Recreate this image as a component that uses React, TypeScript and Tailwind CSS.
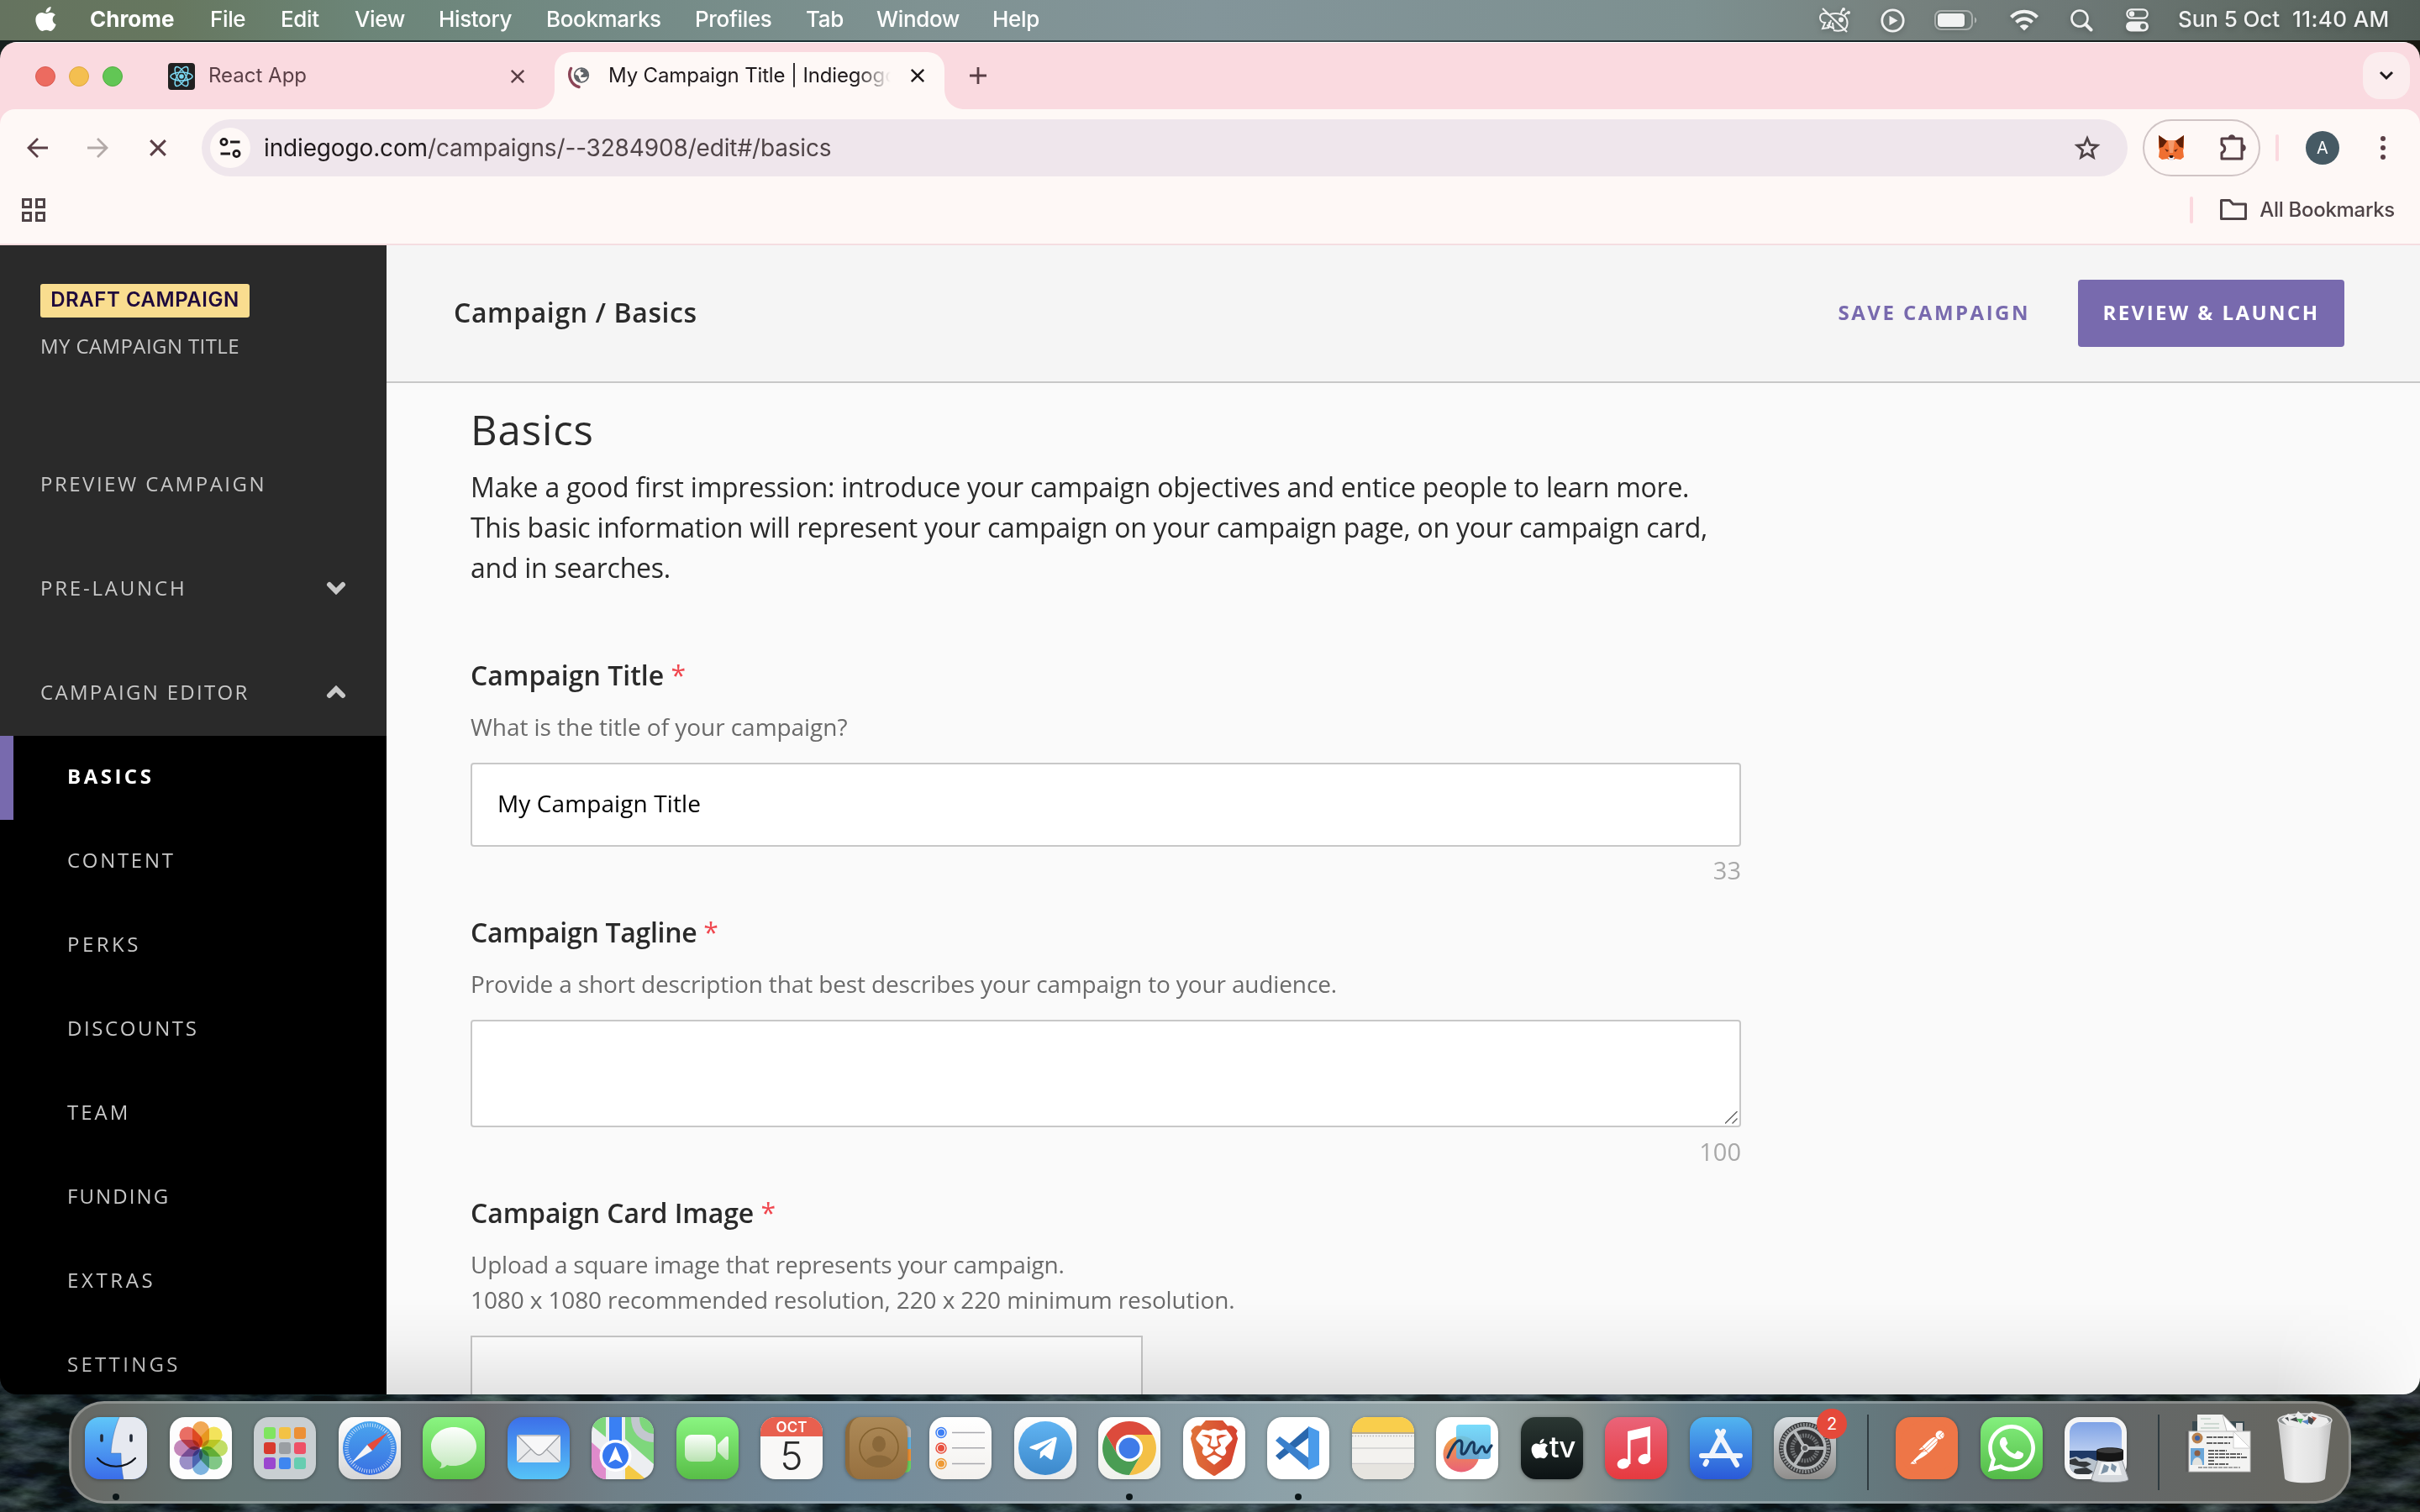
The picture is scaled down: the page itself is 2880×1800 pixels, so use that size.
import type { ReactNode } from "react";
import { FaApple, FaTelegramPlane, FaWhatsapp } from "react-icons/fa";
import { SiBrave, SiPostman } from "react-icons/si";

/* ---------- macOS menu bar ---------- */

const menus = [
  ["File", "w-[84px]"],
  ["Edit", "w-[88px]"],
  ["View", "w-[100px]"],
  ["History", "w-[128px]"],
  ["Bookmarks", "w-[177px]"],
  ["Profiles", "w-[132px]"],
  ["Tab", "w-[84px]"],
  ["Window", "w-[138px]"],
  ["Help", "w-[80px]"],
];

function MenuBar() {
  return (
    <header className="flex h-12 shrink-0 items-center bg-[linear-gradient(90deg,#65735f_0%,#66775f_7%,#6c8578_15%,#738a85_25%,#7f9292_38%,#83959a_50%,#7d9090_70%,#77827f_78%,#6d7876_86%,#616c66_93%,#525d57_100%)] pl-[38px] text-[26px] font-medium tracking-[-0.35px] text-white">
      <FaApple className="-mt-1 mr-[36px] size-[33px]" />
      <span className="w-[143px] pb-[3px] font-bold tracking-normal">Chrome</span>
      {menus.map(([name, width]) => (
        <span key={name} className={"pb-[3px] " + width}>{name}</span>
      ))}
      <div className="ml-auto flex items-center pr-[34px] text-[#f1f2f2] drop-shadow-[0_2px_3px_rgba(0,0,0,0.25)]">
        <svg className="h-8 w-[38px]" viewBox="0 0 38 32" fill="none" stroke="currentColor" strokeWidth="2">
          <path d="M14 9c6-2 14-1 18 3 4 5 3 12-1 15-4 2-9 2-13 1" />
          <path d="M13 10C8 6 2 8 2 13c0 4 3 6 6 6l-3 7 7-1 3-9" />
          <path d="M13 18l-1 8M17 19l1 8M10 22l9 4" />
          <path d="M27 9c0-3 1-5 3-6M31 11c1-3 3-4 6-4" />
          <circle cx="27" cy="15.500" r="2" fill="currentColor" />
          <circle cx="30" cy="3" r="1" />
          <circle cx="36" cy="7" r="1" />
          <path d="M5 2l29 28" strokeWidth="2.200" />
        </svg>
        <svg className="ml-9 size-[29px]" viewBox="0 0 29 29" fill="none">
          <circle cx="14.500" cy="14.500" r="12.700" stroke="currentColor" strokeWidth="2.800" />
          <path d="M10.500 8.800v11.400l10-5.700z" fill="currentColor" />
        </svg>
        <svg className="ml-[35px] h-6 w-[52px]" viewBox="0 0 52 24" fill="none">
          <rect x="1" y="1" width="44" height="22" rx="7" stroke="currentColor" strokeOpacity="0.45" strokeWidth="2" />
          <rect x="4" y="4" width="32" height="16" rx="4" fill="currentColor" />
          <path d="M48 8.500c3 1 3 6 0 7z" fill="currentColor" fillOpacity="0.5" />
        </svg>
        <svg className="ml-[38px] h-[26px] w-[34px]" viewBox="0 0 34 26" fill="none" stroke="currentColor" strokeWidth="4.200">
          <path d="M1.500 9.500C10 .5 24 .5 32.500 9.500" />
          <path d="M7.500 15.500c5.500-5.500 13.500-5.500 19 0" />
          <path d="M17 25.500l-5.300-5.300c3-2.600 7.600-2.600 10.600 0z" fill="currentColor" stroke="none" />
        </svg>
        <svg className="ml-[38px] size-[27px]" viewBox="0 0 27 27" fill="none" stroke="currentColor" strokeLinecap="round">
          <circle cx="11" cy="11" r="9.500" strokeWidth="2.600" />
          <path d="M18 18l6.500 6.500" strokeWidth="4" />
        </svg>
        <svg className="ml-[39px] h-7 w-[27px]" viewBox="0 0 27 28" fill="none">
          <rect x="1.300" y="1.300" width="24.400" height="10.400" rx="5.200" stroke="currentColor" strokeWidth="2.200" />
          <circle cx="7" cy="6.500" r="3.200" fill="currentColor" />
          <rect x="0" y="15.500" width="27" height="12" rx="6" fill="currentColor" />
          <circle cx="20.500" cy="21.500" r="3.400" fill="#65706c" />
        </svg>
        <span className="ml-[35px] pb-[3px] tracking-[-0.1px]">Sun 5 Oct</span>
        <span className="ml-[15px] w-[118px] whitespace-nowrap pb-[3px] tracking-[0.4px]">11:40 AM</span>
      </div>
    </header>
  );
}

/* ---------- Chrome ---------- */

function Cross({ className }: { className: string }) {
  return (
    <svg className={className} viewBox="0 0 20 20" fill="none" stroke="currentColor" strokeWidth="2.800">
      <path d="M2 2l16 16M18 2L2 18" />
    </svg>
  );
}

function TabStrip() {
  return (
    <div className="flex h-20 shrink-0 border-t border-white bg-[#fadae0]">
      <div className="flex w-[200px] items-center gap-4 pl-[42px]">
        <span className="size-6 rounded-full border border-[#d9584f] bg-[#ec6b60]" />
        <span className="size-6 rounded-full border border-[#dfa73d] bg-[#f4bf50]" />
        <span className="size-6 rounded-full border border-[#51ad40] bg-[#62c655]" />
      </div>
      <div className="flex w-[460px] items-center text-[#5a3f46]">
        <svg className="size-8 rounded bg-[#212121]" viewBox="0 0 32 32" fill="none" stroke="#7cd9f3" strokeWidth="1.500">
          <ellipse cx="16" cy="16" rx="13" ry="5" />
          <ellipse cx="16" cy="16" rx="13" ry="5" transform="rotate(60 16 16)" />
          <ellipse cx="16" cy="16" rx="13" ry="5" transform="rotate(120 16 16)" />
          <circle cx="16" cy="16" r="2" fill="#7cd9f3" />
        </svg>
        <span className="ml-4 pb-0.5 text-[24px]">React App</span>
        <Cross className="ml-auto mr-[35px] size-[18px]" />
      </div>
      <div className="relative mt-[11px] flex h-[68px] w-[464px] items-center rounded-t-[20px] bg-[#fef8f6] pb-3">
        <svg className="absolute -left-6 bottom-0 size-6" viewBox="0 0 24 24"><path d="M0 24C14 24 24 14 24 0v24z" fill="#fef8f6" /></svg>
        <svg className="absolute -right-6 bottom-0 size-6" viewBox="0 0 24 24"><path d="M24 24C10 24 0 14 0 0v24z" fill="#fef8f6" /></svg>
        <svg className="ml-[15px] mt-1 h-[27px] w-[27px]" viewBox="0 0 27 27" fill="none">
          <path d="M4.500 2.500C0 11 4.500 22 14 24.500" stroke="#8b4557" strokeWidth="3.400" strokeLinecap="round" />
          <circle cx="17" cy="10.500" r="8.300" stroke="#5f6368" strokeWidth="1.700" fill="#fef8f6" />
          <path d="M17 3c-3 2-1 4 1 4s2 3-1 3l-1 3 5 0c2-1 4 0 4-2 0-5-3-8-8-8zM9 10c3 0 5 1 5 3s2 2 2 5c-4 0-7-4-7-8z" fill="#5f6368" />
        </svg>
        <span className="ml-[22px] w-[336px] overflow-hidden whitespace-nowrap text-[24px] tracking-[-0.15px] text-[#1f1a1c] [mask-image:linear-gradient(90deg,#000_88%,transparent_100%)]">
          My Campaign Title | Indiegogo
        </span>
        <Cross className="ml-[23px] size-[18px] text-[#1f1a1c]" />
      </div>
      <svg className="ml-[29px] mt-[28px] size-[22px]" viewBox="0 0 22 22" stroke="#5a3f46" strokeWidth="2.800">
        <path d="M11 1v20M1 11h20" />
      </svg>
      <div className="ml-auto mr-3 mt-[11px] flex size-14 items-center justify-center rounded-[20px] bg-[#fbedee]">
        <svg className="h-3 w-[18px]" viewBox="0 0 18 12" fill="none" stroke="#1f1a1c" strokeWidth="3"><path d="M2 2l7 7 7-7" /></svg>
      </div>
    </div>
  );
}

function Toolbar() {
  return (
    <div className="shrink-0 bg-[#fadae0]">
      <div className="rounded-t-[18px] bg-[#fef8f6]">
        <div className="flex h-[92px] items-center pl-8 text-[#5a3f46]">
          <svg className="size-[26px]" viewBox="0 0 26 26" fill="none" stroke="currentColor" strokeWidth="2.800"><path d="M25 13H2.500M13 2L2 13l11 11" /></svg>
          <svg className="ml-[45px] size-[26px] text-[#b3aaa8]" viewBox="0 0 26 26" fill="none" stroke="currentColor" strokeWidth="2.800"><path d="M1 13h22.500M13 2l11 11-11 11" /></svg>
          <Cross className="ml-12 size-[22px]" />
          <div className="ml-[41px] flex h-[68px] w-[2292px] items-center rounded-full bg-[#efe6ec] pl-2.5">
            <span className="flex size-12 items-center justify-center rounded-full bg-[#fef8f6]">
              <svg className="size-[26px]" viewBox="0 0 26 26" fill="none" stroke="#1f1a1c" strokeWidth="2.800">
                <circle cx="5.500" cy="6" r="3.600" /><path d="M13 6h11.500M1.500 20H13" /><circle cx="20.500" cy="20" r="3.600" />
              </svg>
            </span>
            <span className="ml-4 whitespace-nowrap text-[28px] tracking-[-0.15px] text-[#4f4447]"><span className="text-[#1f1a1c]">indiegogo.com</span>/campaigns/--3284908/edit#/basics</span>
            <svg className="ml-auto mr-8 size-8" viewBox="0 0 32 32" fill="none" stroke="#4f4447" strokeWidth="2.800">
              <path d="M16 4.500l3.400 8 8.600.7-6.600 5.600 2 8.500L16 22.800l-7.400 4.500 2-8.500L4 13.200l8.600-.7z" />
            </svg>
          </div>
          <div className="ml-[18px] flex h-[68px] w-[140px] items-center rounded-full border-2 border-[#d0c4c5] pl-4">
            <svg className="size-[32px]" viewBox="0 0 32 32">
              <path d="M1 1l9 6h12l9-6v15l-1 3 1 8-4 3-6-1-2 1h-6l-2-1-6 1-4-3 1-8-1-3z" fill="#ef6f31" />
              <path d="M12 7h8l-2 15h-4z" fill="#f49a6c" />
              <path d="M1 1l10 7-5 7-4 1zM31 1L21 8l5 7 4 1z" fill="#5f2008" />
              <path d="M8 17l5 2-2 2zM24 17l-5 2 2 2z" fill="#6b2a12" />
              <path d="M12 27h8l-2 4h-4z" fill="#e8e8f0" /><path d="M13.500 25h5l-1 3h-3z" fill="#2b1410" />
            </svg>
            <svg className="ml-[39px] size-9" viewBox="0 0 36 36" fill="none" stroke="#553f45" strokeWidth="3">
              <path d="M5 7h24v24H5v-7c5-2 5-8 0-10z" strokeLinejoin="round" />
              <path d="M13 6c0-5 8-5 8 0z M30 14c5 0 5 8 0 8z" fill="#553f45" stroke="none" />
            </svg>
          </div>
          <span className="ml-[18px] h-8 w-1 rounded-sm bg-[#fbd9df]" />
          <span className="ml-8 flex size-10 items-center justify-center rounded-full bg-[#465a64] text-[20px] text-white">A</span>
          <div className="ml-[49px] flex flex-col gap-[5px]">
            <span className="size-1.5 rounded-full bg-[#5a3f46]" />
            <span className="size-1.5 rounded-full bg-[#5a3f46]" />
            <span className="size-1.5 rounded-full bg-[#5a3f46]" />
          </div>
        </div>
        <div className="flex h-[70px] items-center border-b-2 border-[#f5dde0] pb-3 pl-[26px]">
          <div className="grid grid-cols-2 gap-1">
            <span className="size-3 border-[3px] border-[#4f4447]" />
            <span className="size-3 border-[3px] border-[#4f4447]" />
            <span className="size-3 border-[3px] border-[#4f4447]" />
            <span className="size-3 border-[3px] border-[#4f4447]" />
          </div>
          <span className="ml-auto h-8 w-1 rounded-sm bg-[#fbd9df]" />
          <svg className="ml-8 h-[26px] w-8" viewBox="0 0 32 26" fill="none" stroke="#4f4447" strokeWidth="3" strokeLinejoin="round">
            <path d="M1.500 23.500v-22h10l4 4.500h15v17.500z" />
          </svg>
          <span className="ml-[15px] mr-[30px] text-[24px] font-medium tracking-[-0.3px] text-[#4f4447]">All Bookmarks</span>
        </div>
      </div>
    </div>
  );
}

/* ---------- Campaign editor page ---------- */

function Chevron({ up = false }: { up?: boolean }) {
  return (
    <svg className="h-4 w-[26px]" viewBox="0 0 26 16" fill="none" stroke="#c8c8c8" strokeWidth="6" strokeLinecap="round">
      {up ? <path d="M5 12l8-8 8 8" /> : <path d="M5 4l8 8 8-8" />}
    </svg>
  );
}

const sections = [
  ["CONTENT", "tracking-[2.700px]"],
  ["PERKS", "tracking-[3.500px]"],
  ["DISCOUNTS", "tracking-[2.600px]"],
  ["TEAM", "tracking-[3px]"],
  ["FUNDING", "tracking-[2.100px]"],
  ["EXTRAS", "tracking-[3.600px]"],
  ["SETTINGS", "tracking-[3.300px]"],
];

function Sidebar() {
  return (
    <aside className="w-[460px] shrink-0 overflow-hidden bg-[#2a2a2a] text-[24px] text-[#c8c8c8]">
      <div className="h-[222px] pl-12 pt-[46px]">
        <div className="flex h-10 w-[249px] items-center justify-center rounded-[3px] bg-[#f9dd8f] pb-0.5 font-['Inter'] font-semibold tracking-[0.55px] text-[#1e0a3c]">DRAFT CAMPAIGN</div>
        <div className="mt-4 leading-9 tracking-[0.4px]">MY CAMPAIGN TITLE</div>
      </div>
      <div className="flex h-[124px] items-center pl-12 tracking-[2.500px]">PREVIEW CAMPAIGN</div>
      <div className="flex h-[124px] items-center justify-between pl-12 pr-[47px] tracking-[2.800px]">PRE-LAUNCH <Chevron /></div>
      <div className="flex h-[114px] items-center justify-between pl-12 pr-[47px] pt-2.5 tracking-[2.300px]">CAMPAIGN EDITOR <Chevron up /></div>
      <nav className="bg-black">
        <div className="flex h-[100px] items-center border-l-16 border-[#786aae] pb-1 pl-16 font-bold tracking-[3.500px] text-white">BASICS</div>
        {sections.map(([name, tracking]) => (
          <div key={name} className={"flex h-[100px] items-center pb-1 pl-20 " + tracking}>{name}</div>
        ))}
      </nav>
    </aside>
  );
}

function Label({ children }: { children: ReactNode }) {
  return (
    <div className="whitespace-nowrap text-[32px] font-semibold leading-[44px]">
      {children} <span className="font-normal text-[#f0474f]">*</span>
    </div>
  );
}

function Editor() {
  return (
    <main className="flex grow flex-col overflow-hidden bg-[#fafafa] text-[#2a2a2a]">
      <div className="flex h-[164px] shrink-0 items-center border-b-2 border-[#c8c8c8] bg-[#f5f5f5] pl-20 pr-[90px]">
        <h1 className="pb-0.5 text-[32px] font-semibold tracking-[0.6px]">Campaign / Basics</h1>
        <span className="ml-auto pb-0.5 text-[24px] font-bold tracking-[2.500px] text-[#786aae]">SAVE CAMPAIGN</span>
        <span className="ml-[57px] flex h-20 w-[317px] items-center justify-center rounded bg-[#786aae] pb-0.5 text-[24px] font-bold tracking-[2.450px] text-white">REVIEW &amp; LAUNCH</span>
      </div>
      <div className="w-[1612px] pl-[100px] pt-[25px]">
        <h2 className="text-[49px] leading-[60px] tracking-[0.9px]">Basics</h2>
        <p className="mt-[15px] whitespace-nowrap text-[32px] leading-[48px] tracking-[-0.255px]">
          Make a good first impression: introduce your campaign objectives and entice people to learn more.<br />
          This basic information will represent your campaign on your campaign page, on your campaign card,<br />
          and in searches.
        </p>
        <div className="mt-[82px]"><Label>Campaign Title</Label></div>
        <p className="mt-[18px] text-[28px] leading-[42px] tracking-[-0.050px] text-[#6a6a6a]">What is the title of your campaign?</p>
        <div className="mt-[22px] flex h-[100px] items-center rounded border-2 border-[#c8c8c8] bg-white pb-1 pl-[30px] text-[28px] tracking-[0.1px] text-black">My Campaign Title</div>
        <div className="mt-[7px] text-right text-[29px] leading-[42px] text-[#a8a8a8]">33</div>
        <div className="mt-[31px] tracking-[-0.3px]"><Label>Campaign Tagline</Label></div>
        <p className="mt-[18px] text-[28px] leading-[42px] tracking-[-0.140px] text-[#6a6a6a]">Provide a short description that best describes your campaign to your audience.</p>
        <div className="mt-[22px] flex h-32 items-end justify-end rounded border-2 border-[#c8c8c8] bg-white">
          <svg className="mb-0.5 mr-0.5 size-[15px]" viewBox="0 0 15 15" stroke="#606060" strokeWidth="1.400"><path d="M0 14.500L14.500 0M8.500 14.500l6-6" /></svg>
        </div>
        <div className="mt-2 text-right text-[29px] leading-[42px] text-[#a8a8a8]">100</div>
        <div className="mt-[30px] tracking-[-0.1px]"><Label>Campaign Card Image</Label></div>
        <p className="mt-[18px] whitespace-nowrap text-[28px] leading-[42px] tracking-[-0.120px] text-[#6a6a6a]">
          <span className="tracking-[-0.220px]">Upload a square image that represents your campaign.</span><br />
          1080 x 1080 recommended resolution, 220 x 220 minimum resolution.
        </p>
        <div className="mt-[22px] h-40 w-[800px] border-2 border-[#c8c8c8] bg-white" />
      </div>
    </main>
  );
}

/* ---------- Dock ---------- */

function Tile({ className, children }: { className: string; children?: ReactNode }) {
  return (
    <div className={"size-[74px] shrink-0 overflow-hidden rounded-[18px] shadow-[0_1px_4px_rgba(0,0,0,0.35)] " + className}>
      {children}
    </div>
  );
}

const petals = ["#f19a38", "#f3e03f", "#b9d94b", "#6cbf72", "#67a8dc", "#8a7cc0", "#bb74b0", "#e8564a"];
const launchpad = ["#7fe560", "#f3c244", "#ec9036", "#d83a2e", "#9a9fa3", "#ee5166", "#9a47cf", "#3f86f0", "#66cdb0"];

function Running() {
  return <span className="absolute -bottom-[25px] left-[33px] size-2 rounded-full bg-[#0b1517]" />;
}

function Dock() {
  return (
    <footer className="relative mx-auto mt-2 flex h-[122px] w-[2716px] shrink-0 items-start gap-[26.5px] rounded-[42px] border-[3px] border-white/25 bg-[linear-gradient(90deg,#666763_0%,#667877_7%,#67787c_12%,#6a6c70_18%,#6f8088_24%,#728b9b_34%,#80919a_44%,#8ba0a8_52%,#97a6a7_61%,#8a9492_66%,#697f88_71%,#657d82_77%,#636e73_83%,#646868_90%,#67665f_100%)] pl-4 pt-4">
      <div className="relative">
        <Tile className="bg-[linear-gradient(#5fc6f9,#3a6de8)]">
          <svg viewBox="0 0 74 74">
            <path d="M41 0C35 14 32 28 31 43h12c0 11 1 21 3 31h28V0z" fill="#e6e9f0" />
            <path d="M41 0C35 14 32 28 31 43h12c0 11 1 21 3 31" fill="none" stroke="#3b5f9a" strokeOpacity="0.45" />
            <path d="M20 22v6M55 22v6" stroke="#222a38" strokeWidth="3.600" strokeLinecap="round" />
            <path d="M15 49c11 13 33 13 45 0" fill="none" stroke="#10141c" strokeWidth="2.200" strokeLinecap="round" />
          </svg>
        </Tile>
        <Running />
      </div>
      <Tile className="bg-[#fdfdfd]">
        <svg viewBox="0 0 74 74">
          {petals.map((c, i) => (
            <rect key={c} x="27" y="5" width="20" height="31" rx="10" fill={c} fillOpacity="0.85" className="mix-blend-multiply" transform={`rotate(${i * 45} 37 37)`} />
          ))}
        </svg>
      </Tile>
      <Tile className="grid grid-cols-3 content-center justify-center gap-1 bg-[#c9cfd2] p-3">
        {launchpad.map((c) => (
          <span key={c} className="size-3.5 rounded-[3px]" style={{ background: c }} />
        ))}
      </Tile>
      <Tile className="bg-[linear-gradient(#ffffff,#d6d6d6)]">
        <svg viewBox="0 0 74 74">
          <defs><linearGradient id="saf" x1="0" y1="0" x2="0" y2="1"><stop stopColor="#4aa6ee" /><stop offset="1" stopColor="#3970e2" /></linearGradient></defs>
          <circle cx="37" cy="37" r="32" fill="url(#saf)" />
          <circle cx="37" cy="37" r="27.500" fill="none" stroke="#fff" strokeOpacity="0.75" strokeWidth="4.500" strokeDasharray="0.9 1.980" />
          <path d="M59 18L34 33l6 7z" fill="#e54b3c" />
          <path d="M15 55l19-22 6 7z" fill="#f4f4f6" />
        </svg>
      </Tile>
      <Tile className="bg-[linear-gradient(#8af581,#5bc149)]">
        <svg viewBox="0 0 74 74">
          <defs><linearGradient id="msg" x1="0" y1="0" x2="0" y2="1"><stop stopColor="#fdfffd" /><stop offset="1" stopColor="#c3e8bd" /></linearGradient></defs>
          <path d="M37 12c15 0 27 10 27 23S52 58 37 58c-3 0-6 0-8-1-3 3-6 4-9 4 2-2 3-4 2-7-7-4-12-11-12-19 0-13 12-23 27-23z" fill="url(#msg)" />
        </svg>
      </Tile>
      <Tile className="bg-[linear-gradient(#3c6fe9,#56c3f7)]">
        <svg viewBox="0 0 74 74">
          <rect x="11" y="21" width="52" height="33" rx="3.500" fill="#e9eaec" />
          <path d="M12 53l18-17M62 53L44 36" stroke="#a4a7ac" strokeWidth="1.200" />
          <path d="M12 22l21 21c3 3 6 3 9 0l20-21z" fill="#f7f7f8" stroke="#9b9ea3" strokeWidth="1.200" />
        </svg>
      </Tile>
      <Tile className="bg-[#eceef1]">
        <svg viewBox="0 0 74 74">
          <path d="M0 0h17v24L0 10zM40 0h34v56L40 26z" fill="#7ed77c" />
          <path d="M0 30l17 15v29H0z" fill="#df8bcb" />
          <path d="M40 54l25 20H40z" fill="#f4c944" />
          <path d="M52 0c0 16 8 24 22 25" fill="none" stroke="#c3c7cf" strokeWidth="10" />
          <rect x="20" width="17" height="74" fill="#f0f1f4" />
          <rect x="21" width="15" height="34" fill="#3a80f3" />
          <circle cx="28.500" cy="46" r="19" fill="#fff" /><circle cx="28.500" cy="46" r="15.500" fill="#3678f0" />
          <path d="M28.500 35l8.500 20-8.500-4.500L20 55z" fill="#fff" />
        </svg>
      </Tile>
      <Tile className="bg-[linear-gradient(#8af581,#58be47)]">
        <svg viewBox="0 0 74 74">
          <defs><linearGradient id="ftm" x1="0" y1="0" x2="0" y2="1"><stop stopColor="#fbfffb" /><stop offset="1" stopColor="#b9e2b1" /></linearGradient></defs>
          <rect x="10" y="21" width="37" height="32" rx="8" fill="url(#ftm)" />
          <path d="M49 33l9-9c2-2 4-1 4 1v24c0 2-2 3-4 1l-9-9z" fill="url(#ftm)" />
        </svg>
      </Tile>
      <Tile className="flex flex-col items-center bg-[#f9f8f7]">
        <div className="h-[23px] w-full bg-[#e8604f] text-center text-[17px] font-semibold leading-[25px] text-white">OCT</div>
        <div className="text-[46px] font-light leading-[47px] text-[#2a2a2a]">5</div>
      </Tile>
      <div className="relative">
        <div className="absolute -right-1 top-2.5 flex h-14 w-3 flex-col overflow-hidden rounded-r-md">
          <span className="grow bg-[#b9b9b9]" /><span className="grow bg-[#5fb4e6]" /><span className="grow bg-[#f09233]" /><span className="grow bg-[#6cd35f]" />
        </div>
        <Tile className="relative border-l-[5px] border-[#8d6a3b] bg-[linear-gradient(#ad8a58,#97703f)]">
          <svg viewBox="2 0 74 74" className="size-[74px]">
            <circle cx="37" cy="36" r="23" fill="none" stroke="#83612f" strokeWidth="1.600" />
            <ellipse cx="37" cy="32" rx="8" ry="9.500" fill="#8a683a" />
            <path d="M21 53c4-10 28-10 32 0-8 9-24 9-32 0z" fill="#8a683a" />
          </svg>
        </Tile>
      </div>
      <Tile className="bg-[linear-gradient(#ffffff,#f3f1ee)]">
        <svg viewBox="0 0 74 74" fill="none" strokeWidth="1.500">
          <g stroke="#a9a9ae"><path d="M27 18.500h39M27 36.800h39M27 55.500h39" /></g>
          <circle cx="14" cy="18.500" r="4" fill="#3d7ff5" /><circle cx="14" cy="18.500" r="6" stroke="#3d7ff5" />
          <circle cx="14" cy="37" r="4" fill="#e9503f" /><circle cx="14" cy="37" r="6" stroke="#e9503f" />
          <circle cx="14" cy="55.500" r="4" fill="#ee9a35" /><circle cx="14" cy="55.500" r="6" stroke="#ee9a35" />
        </svg>
      </Tile>
      <Tile className="flex items-center justify-center bg-[linear-gradient(#ffffff,#e9e9e9)]">
        <div className="flex size-16 items-center justify-center rounded-full bg-[linear-gradient(#61b4f2,#3c88cb)]">
          <FaTelegramPlane className="mr-1 size-[37px] text-white" />
        </div>
      </Tile>
      <div className="relative">
        <Tile className="bg-[linear-gradient(#ffffff,#f0f1ec)]">
          <svg viewBox="0 0 74 74">
            <path d="M9.300 21A32 32 0 0 1 64.700 21H37L23.100 45z" fill="#dc4b3c" />
            <path d="M9.300 21A32 32 0 0 0 37 69l13.900-24H23.100z" fill="#4a9d54" />
            <path d="M64.700 21A32 32 0 0 1 37 69l13.900-24L53 37 48 26 37 21z" fill="#f4c046" />
            <circle cx="37" cy="37" r="16" fill="#fff" /><circle cx="37" cy="37" r="12.500" fill="#3f7be8" />
          </svg>
        </Tile>
        <Running />
      </div>
      <Tile className="flex items-center justify-center bg-white">
        <svg className="absolute size-0"><defs><linearGradient id="brv" x1="0" x2="1"><stop stopColor="#e0733a" /><stop offset="1" stopColor="#d5402e" /></linearGradient></defs></svg>
        <SiBrave className="size-[66px] [fill:url(#brv)]" />
      </Tile>
      <div className="relative">
        <Tile className="bg-white">
          <svg viewBox="0 0 74 74">
            <path d="M10 46l5 5L50 24V11z" fill="#2a67ad" />
            <path d="M10 28l5-5 35 26v14z" fill="#3a80cc" />
            <path d="M49 11l13 6v40l-13 6z" fill="#4a9bea" />
          </svg>
        </Tile>
        <Running />
      </div>
      <Tile className="bg-[#f3f2ef]">
        <svg viewBox="0 0 74 74">
          <rect width="74" height="18" fill="#f9ce4c" />
          <path d="M0 19h74" stroke="#a99468" strokeWidth="1.500" />
          <path d="M0 22.500h74" stroke="#b5b5b5" strokeWidth="1.500" strokeDasharray="1.500 2" />
          <path d="M0 37h74M0 55.500h74" stroke="#d0d0d0" strokeWidth="1.500" />
          <rect y="56" width="74" height="18" fill="#e6e4df" />
        </svg>
      </Tile>
      <Tile className="bg-white">
        <svg viewBox="0 0 74 74">
          <defs>
            <linearGradient id="frb" x1="0" y1="0" x2="0" y2="1"><stop stopColor="#66d6fa" /><stop offset="1" stopColor="#58a9dc" /></linearGradient>
            <linearGradient id="fro" x1="0" y1="0" x2="0" y2="1"><stop stopColor="#f0a544" /><stop offset="1" stopColor="#ea6277" /></linearGradient>
          </defs>
          <circle cx="30" cy="44" r="21.500" fill="url(#fro)" />
          <rect x="24" y="9" width="41" height="41" rx="4" fill="url(#frb)" fillOpacity="0.88" />
          <path d="M14 48c4-10 10-21 15-20 5 2-2 16 3 16 5 1 7-15 12-14 4 1-2 12 3 13 4 1 5-8 8-8 4 0 1 7 5 7 2 0 3-5 6-8" fill="none" stroke="#173a5f" strokeWidth="3.200" strokeLinecap="round" />
        </svg>
      </Tile>
      <Tile className="flex items-center justify-center bg-[linear-gradient(#2b3733,#0c1214)] text-white">
        <FaApple className="size-[27px]" />
        <span className="-ml-0.5 pb-1 text-[35px] font-medium leading-none tracking-[-1px]">tv</span>
      </Tile>
      <Tile className="bg-[linear-gradient(#ea6479,#e63a3f)]">
        <svg viewBox="0 0 74 74" fill="#fff">
          <path d="M27 17l27-6v39h-3.500V23L30.500 27.500V56H27z" />
          <ellipse cx="22" cy="55.500" rx="7.500" ry="6" transform="rotate(-15 22 55.500)" /><ellipse cx="47" cy="50" rx="7.500" ry="6" transform="rotate(-15 47 50)" />
        </svg>
      </Tile>
      <Tile className="bg-[linear-gradient(#52b5f0,#2a59d8)]">
        <svg viewBox="0 0 74 74" fill="none" stroke="#f2f5fb" strokeWidth="6" strokeLinecap="round">
          <path d="M40 17L25 46M33 17l23 40M20 53l-1.500 3M14 46h46" />
        </svg>
      </Tile>
      <div className="relative">
        <Tile className="bg-[linear-gradient(#d9dfe3,#8f8d8b)]">
          <svg viewBox="0 0 74 74" fill="none">
            <circle cx="37" cy="37" r="31" fill="#333436" />
            <circle cx="37" cy="37" r="28" stroke="#8d9092" strokeWidth="4" strokeDasharray="2 1.500" />
            <circle cx="37" cy="37" r="24" stroke="#b5b8ba" strokeWidth="3.500" />
            <circle cx="37" cy="37" r="15" stroke="#707375" strokeWidth="5" strokeDasharray="2 1.200" />
            <path d="M37 37h25M37 37L24 16M37 37L24 58" stroke="#b5b8ba" strokeWidth="4" />
            <circle cx="37" cy="37" r="4" fill="#56585a" stroke="#c0c3c5" strokeWidth="2" />
          </svg>
        </Tile>
        <span className="absolute -right-[13px] -top-2.5 flex size-9 items-center justify-center rounded-full bg-[#e5493a] text-[20px] text-white">2</span>
      </div>
      <span className="-mt-[3px] ml-[10px] h-[90px] w-0.5 bg-[#2f3b40]" />
      <Tile className="ml-[6px] flex items-center justify-center bg-[#ee7647]">
        <span className="flex size-[58px] items-center justify-center rounded-full bg-white">
          <SiPostman className="size-[66px] shrink-0 text-[#ee7647]" />
        </span>
      </Tile>
      <Tile className="flex items-center justify-center bg-[linear-gradient(#84f07e,#53ba47)]">
        <FaWhatsapp className="size-[64px] text-white" />
      </Tile>
      <div className="relative">
        <Tile className="border-[6px] border-[#f4f4f5] bg-white">
          <svg viewBox="0 0 62 62">
            <defs><linearGradient id="sky" x1="0" y1="0" x2="0" y2="1"><stop stopColor="#7ea2e6" /><stop offset="1" stopColor="#b9cdf0" /></linearGradient></defs>
            <rect width="62" height="35" fill="url(#sky)" />
            <rect y="34" width="62" height="28" fill="#203a66" />
            <path d="M0 43l8-2 6 3 8-2 10 4 30-2v18H0z" fill="#b9c3cd" />
            <path d="M0 45l7-2 4 4 9 0 6 3-8 4-18-4zM6 56l14-2 8 5-5 3H4z" fill="#34383c" />
          </svg>
        </Tile>
        <svg className="absolute -bottom-1 -right-[3px] h-[42px] w-[46px]" viewBox="0 0 46 42">
          <path d="M9 14L1 38c0 5 44 5 44 0l-8-24z" fill="#d5d9dd" stroke="#8d9297" />
          <path d="M13 18l-4 15h28l-4-15z" fill="#f2f4f5" />
          <path d="M16 20l6 3-2 6-8 3zM25 19l6 4-2 7-5-4z" fill="#7d93a6" />
          <path d="M7 4c0-5 32-5 32 0v10c0 4-32 4-32 0z" fill="#161616" />
          <ellipse cx="23" cy="4" rx="15" ry="3" fill="#3c3c3c" />
        </svg>
      </div>
      <span className="-mt-[3px] ml-[10.500px] h-[90px] w-0.5 bg-[#2f3b40]" />
      <svg className="-mt-[3px] ml-[4px] h-[70px] w-[78px] shrink-0" viewBox="0 0 78 70">
        <rect x="8" y="8" width="62" height="30" fill="#3a4a50" /><rect x="60" y="10" width="8" height="16" fill="#d8d8d8" />
        <path d="M14 0h30l15 20v10H14z" fill="#f1f2f0" /><path d="M44 0l19 20h-14z" fill="#fff" stroke="#bbb" />
        <path d="M18 5h12M22 11h18M18 16h22" stroke="#a9bfb2" />
        <rect x="0" y="20" width="6" height="48" fill="#5c5c5c" />
        <rect x="4" y="20" width="73" height="48" fill="#f3f3f2" stroke="#bfbfbf" />
        <circle cx="14" cy="28" r="6.500" fill="#b9824f" /><circle cx="14" cy="28" r="3" fill="#3c62a8" />
        <rect x="6" y="40" width="16" height="20" fill="#6aa6d8" /><circle cx="14" cy="46" r="3.500" fill="#8d5f45" /><path d="M8 60c0-12 12-12 12 0z" fill="#e3e3df" />
        <path d="M25 27h34M25 34h28M27 43h22M27 47h40M27 51h46M27 55h8M27 59h24" stroke="#333" strokeWidth="1.700" strokeDasharray="7 1 4 1" />
        <path d="M57 20l20 20H57z" fill="#fff" stroke="#ccc" /><path d="M15 63h50" stroke="#555" strokeDasharray="5 1" />
      </svg>
      <svg className="-mt-[7px] ml-[3.500px] h-[86px] w-[68px] shrink-0" viewBox="0 0 68 86">
        <defs><linearGradient id="bin" x1="0" x2="1"><stop stopColor="#c9c9c9" /><stop offset="0.3" stopColor="#ededed" /><stop offset="0.75" stopColor="#e2e2e2" /><stop offset="1" stopColor="#bdbdbd" /></linearGradient></defs>
        <path d="M2 10l8 70c1 7 47 7 48 0l8-70z" fill="url(#bin)" />
        <ellipse cx="34" cy="11" rx="32" ry="8" fill="#8b8f90" stroke="#dcdcdc" strokeWidth="1.500" />
        <path d="M6 10l8-7 8 3 4-6 8 7 8-6 9 5 9 2 3 5-10 6-12 1-14 0-14-3z" fill="#ececec" />
        <path d="M16 10l8-3 2 6zM38 6l8 4-4 6-5-3zM10 8l4-1 1 5z" fill="#454a4c" />
        <path d="M24 9l8 0-3 6z" fill="#57b96b" /><path d="M42 6l6 2-3 4z" fill="#b35a4a" /><path d="M30 12l8-2 0 6z" fill="#5a86c4" />
      </svg>
    </footer>
  );
}

export default function App() {
  return (
    <div className="relative isolate flex h-[1800px] w-[2880px] flex-col overflow-hidden bg-[linear-gradient(90deg,#17201f,#1b3034_35%,#3f5054_55%,#15272c_72%,#17160f)] font-['Inter',sans-serif]">
      {/* rocky desktop wallpaper */}
      <svg className="absolute inset-x-0 bottom-0 -z-10 h-[160px] w-full opacity-50" preserveAspectRatio="none">
        <filter id="rock" colorInterpolationFilters="sRGB">
          <feTurbulence type="fractalNoise" baseFrequency="0.018 0.05" numOctaves="5" seed="7" />
          <feColorMatrix values="1 0 0 0 -0.38  1.1 0.1 0 0 -0.42  1.1 0 0.15 0 -0.42  0 0 0 0 1" />
        </filter>
        <rect width="100%" height="100%" filter="url(#rock)" />
      </svg>
      <MenuBar />
      <div className="relative mt-0.5 flex h-[1610px] shrink-0 flex-col overflow-hidden rounded-[20px]">
        <TabStrip />
        <Toolbar />
        <div className="flex min-h-0 grow font-['Open_Sans',sans-serif]">
          <Sidebar />
          <Editor />
        </div>
        {/* dock shadow over the window's lower edge */}
        <div className="pointer-events-none absolute inset-x-0 bottom-0 h-[110px] bg-[linear-gradient(to_bottom,transparent,rgba(0,0,0,0.03)_45%,rgba(0,0,0,0.11))] [mask-image:linear-gradient(90deg,#000_94%,transparent)]" />
      </div>
      <Dock />
    </div>
  );
}
